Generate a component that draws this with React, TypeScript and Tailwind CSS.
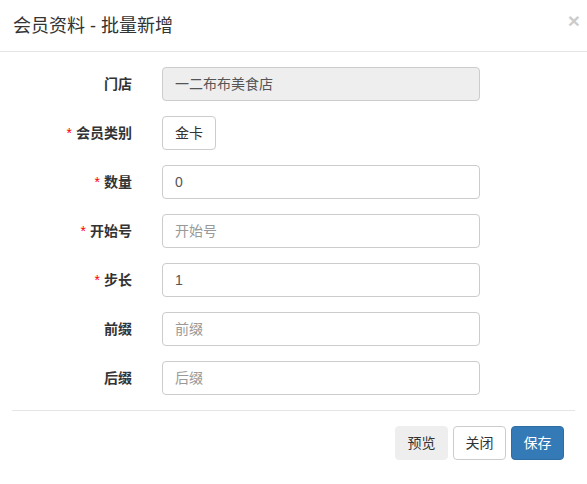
import React from "react";

const font = { fontFamily: '"Liberation Sans", "Noto Sans CJK SC", sans-serif' };

type Field = {
  label: string;
  required?: boolean;
  kind: "disabled" | "button" | "input";
  value?: string;
  placeholder?: string;
};

const fields: Field[] = [
  { label: "门店", kind: "disabled", value: "一二布布美食店" },
  { label: "会员类别", required: true, kind: "button", value: "金卡" },
  { label: "数量", required: true, kind: "input", value: "0" },
  { label: "开始号", required: true, kind: "input", placeholder: "开始号" },
  { label: "步长", required: true, kind: "input", value: "1" },
  { label: "前缀", kind: "input", placeholder: "前缀" },
  { label: "后缀", kind: "input", placeholder: "后缀" },
];

function Control({ f }: { f: Field }) {
  if (f.kind === "button") {
    return (
      <button className="h-[34px] px-[12px] rounded-[4px] border border-[#ccc] bg-white text-[14px] text-[#333]">
        {f.value}
      </button>
    );
  }
  if (f.kind === "disabled") {
    return (
      <div className="h-[34px] w-[318px] px-[12px] flex items-center rounded-[4px] border border-[#ccc] bg-[#eee] text-[14px] text-[#555]">
        {f.value}
      </div>
    );
  }
  return (
    <input
      className="h-[34px] w-[318px] px-[12px] rounded-[4px] border border-[#ccc] bg-white text-[14px] text-[#555] placeholder:text-[#999] outline-none"
      defaultValue={f.value}
      placeholder={f.placeholder}
      style={font}
    />
  );
}

export default function App() {
  return (
    <div className="w-[587px] h-[484px] bg-white text-[#333]" style={font}>
      <div className="h-[52px] pl-[13px] pr-[7px] flex items-center justify-between border-b border-[#e5e5e5]">
        <h4 className="text-[18px] leading-[20px] text-[#333]">会员资料 - 批量新增</h4>
        <span className="text-[21px] font-bold leading-none text-black opacity-20 -mt-[10px]">×</span>
      </div>
      <div className="pt-[15px]">
        {fields.map((f) => (
          <div key={f.label} className="flex items-center h-[34px] mb-[15px]">
            <label className="w-[132px] text-right text-[14px] font-bold text-[#333]">
              {f.required && <span className="text-[#ff0000] font-normal mr-[4px]">*</span>}
              {f.label}
            </label>
            <div className="ml-[30px]">
              <Control f={f} />
            </div>
          </div>
        ))}
      </div>
      <div className="mx-[12px] mt-[1px] border-t border-[#e5e5e5]" />
      <div className="flex justify-end gap-[5px] pt-[15px] pr-[23px]">
        <button className="h-[34px] w-[53px] rounded-[4px] border border-[#eee] bg-[#eee] text-[14px] text-[#333]">
          预览
        </button>
        <button className="h-[34px] w-[53px] rounded-[4px] border border-[#ccc] bg-white text-[14px] text-[#333]">
          关闭
        </button>
        <button className="h-[34px] w-[53px] rounded-[4px] border border-[#2e6da4] bg-[#337ab7] text-[14px] text-white">
          保存
        </button>
      </div>
    </div>
  );
}
